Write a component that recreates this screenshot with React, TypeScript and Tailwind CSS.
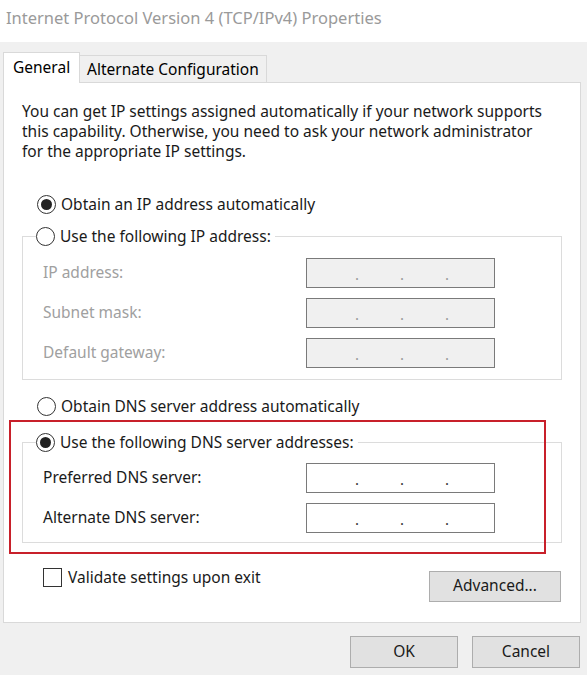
import React from "react";

const font = { fontFamily: '"Noto Sans", "Liberation Sans", sans-serif' };

function Radio({ checked }: { checked?: boolean }) {
  return (
    <span className="flex h-[19px] w-[19px] shrink-0 items-center justify-center rounded-full border border-[#333] bg-white">
      {checked && <span className="h-[11px] w-[11px] rounded-full bg-[#222]" />}
    </span>
  );
}

function IpBox({ disabled }: { disabled?: boolean }) {
  return (
    <div
      className={
        "relative h-[30px] w-[189px] border " +
        (disabled ? "border-[#7a7a7a] bg-[#f0f0f0] text-[#999]" : "border-[#7a7a7a] bg-white text-[#333]")
      }
    >
      <span className="absolute left-[48px] top-[5px] text-[15px] leading-5">.</span>
      <span className="absolute left-[93px] top-[5px] text-[15px] leading-5">.</span>
      <span className="absolute left-[138px] top-[5px] text-[15px] leading-5">.</span>
    </div>
  );
}

function Row({ label, disabled }: { label: string; disabled?: boolean }) {
  return (
    <div className="flex h-[30px] items-center">
      <span className={"w-[283px] pl-[20px] " + (disabled ? "text-[#a0a0a0]" : "text-[#1a1a1a]")}>{label}</span>
      <IpBox disabled={disabled} />
    </div>
  );
}

export default function App() {
  return (
    <div className="h-[675px] w-[587px] overflow-hidden bg-[#f0f0f0] text-[15.5px] text-[#1a1a1a]" style={font}>
      <div className="flex h-[42px] items-center bg-white pb-[6px] pl-[6px] text-[16.5px] text-[#9a9a9a]">
        Internet Protocol Version 4 (TCP/IPv4) Properties
      </div>

      {/* tabs */}
      <div className="mt-[10px] flex pl-[3px]">
        <div className="relative z-10 flex h-[31px] w-[77px] items-center border border-b-0 border-[#d9d9d9] bg-white pl-[9px] text-[#000]">
          General
        </div>
        <div className="mt-[3px] flex h-[27px] items-center border border-b-0 border-l-0 border-[#d9d9d9] bg-[#f0f0f0] px-[7px] pt-[1px] text-[#000]">
          Alternate Configuration
        </div>
      </div>

      {/* panel */}
      <div className="relative -mt-px ml-[3px] h-[541px] w-[578px] border border-[#d9d9d9] bg-white px-[18px] pt-[18px]">
        <p className="max-w-[525px] leading-5">
          You can get IP settings assigned automatically if your network supports this capability. Otherwise, you need to
          ask your network administrator for the appropriate IP settings.
        </p>

        <div className="mt-[32px] flex items-center gap-[5px] pl-[15px]">
          <Radio checked />
          <span>Obtain an IP address automatically</span>
        </div>

        <fieldset className="mt-[9px] h-[155px] w-[540px] border border-[#dcdcdc] px-0">
          <legend className="ml-[13px] flex items-center gap-[5px] pr-[4px]">
            <Radio />
            <span>Use the following IP address:</span>
          </legend>
          <div className="mt-[9px] flex flex-col gap-[10px]">
            <Row label="IP address:" disabled />
            <Row label="Subnet mask:" disabled />
            <Row label="Default gateway:" disabled />
          </div>
        </fieldset>

        <div className="mt-[15px] flex items-center gap-[5px] pl-[15px]">
          <Radio />
          <span>Obtain DNS server address automatically</span>
        </div>

        <fieldset className="mt-[12px] h-[112px] w-[540px] border border-[#dcdcdc] px-0">
          <legend className="ml-[13px] flex items-center gap-[5px] pr-[4px]">
            <Radio checked />
            <span>Use the following DNS server addresses:</span>
          </legend>
          <div className="mt-[9px] flex flex-col gap-[10px]">
            <Row label="Preferred DNS server:" />
            <Row label="Alternate DNS server:" />
          </div>
        </fieldset>

        <div className="mt-[22px] flex items-start justify-between pr-[1px]">
          <div className="mt-[1px] flex items-center gap-[6px] pl-[21px]">
            <span className="h-[19px] w-[19px] border border-[#333] bg-white" />
            <span>Validate settings upon exit</span>
          </div>
          <button className="mt-[6px] h-[31px] w-[132px] border border-[#adadad] bg-[#e1e1e1] text-[#1a1a1a]">
            Advanced...
          </button>
        </div>

        {/* highlight box */}
        <div className="pointer-events-none absolute left-[5px] top-[337px] h-[134px] w-[537px] border-2 border-[#c8202a]" />
      </div>

      <div className="mt-[13px] flex justify-end gap-[14px] pr-[7px]">
        <button className="h-[32px] w-[108px] border border-[#adadad] bg-[#e1e1e1]">OK</button>
        <button className="h-[32px] w-[108px] border border-[#adadad] bg-[#e1e1e1]">Cancel</button>
      </div>
    </div>
  );
}
